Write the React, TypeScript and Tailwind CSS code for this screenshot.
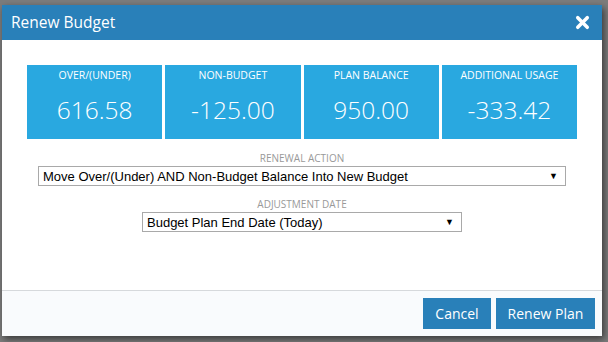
import { X } from 'lucide-react';

const tiles = [
  { label: 'Over/(Under)', value: '616.58' },
  { label: 'Non-Budget', value: '-125.00' },
  { label: 'Plan Balance', value: '950.00' },
  { label: 'Additional Usage', value: '-333.42' },
];

function FakeSelect({ text, width }: { text: string; width: string }) {
  return (
    <div
      className={`${width} mx-auto h-[20px] flex items-center justify-between bg-white border border-[#a9a9a9] pl-[4px] pr-[7px] text-[13px] text-black`}
      style={{ fontFamily: '"Liberation Sans", Arial, sans-serif' }}
    >
      <span className="leading-none">{text}</span>
      <span className="text-[9px] leading-none">▼</span>
    </div>
  );
}

export default function App() {
  return (
    <div
      className="w-[608px] h-[342px] bg-[#7c7c7c] pl-[2px] pt-[5px] overflow-hidden"
      style={{ fontFamily: '"Open Sans", sans-serif' }}
    >
      {/* Modal */}
      <div className="w-[600px] h-[331px] bg-white flex flex-col shadow-[2px_3px_7px_rgba(0,0,0,0.55)]">
        {/* Header */}
        <div className="h-[35px] bg-[#2980b9] flex items-center justify-between pl-[9px] pr-[10px]">
          <span className="text-white text-[15.5px] leading-none">Renew Budget</span>
          <X className="w-[19px] h-[19px] text-white" strokeWidth={4.5} />
        </div>

        {/* Body */}
        <div className="flex-1 px-[25px] pt-[25px]">
          <div className="grid grid-cols-4 gap-[3px]">
            {tiles.map((t) => (
              <div key={t.label} className="h-[74px] bg-[#29a8e0] flex flex-col items-center text-white">
                <div className="mt-[3px] text-[10.5px] uppercase leading-[14px]">{t.label}</div>
                <div className="mt-[13px] text-[24.5px] font-light leading-[30px]">{t.value}</div>
              </div>
            ))}
          </div>

          <div className="mt-[13px] text-center text-[10px] uppercase text-[#999999] leading-[12px]">Renewal Action</div>
          <div className="mt-[2px]">
            <FakeSelect text="Move Over/(Under) AND Non-Budget Balance Into New Budget" width="w-[528px]" />
          </div>

          <div className="mt-[12px] text-center text-[10px] uppercase text-[#999999] leading-[12px]">Adjustment Date</div>
          <div className="mt-[2px]">
            <FakeSelect text="Budget Plan End Date (Today)" width="w-[320px]" />
          </div>
        </div>

        {/* Footer */}
        <div className="h-[46px] border-t border-[#d6d9dc] bg-[#f9fbfd] flex items-start justify-end gap-[5px] pt-[7px] pr-[7px]">
          <button className="h-[31px] w-[68px] bg-[#2980b9] text-white text-[14px]">Cancel</button>
          <button className="h-[31px] w-[99px] bg-[#2980b9] text-white text-[14px]">Renew Plan</button>
        </div>
      </div>
    </div>
  );
}
